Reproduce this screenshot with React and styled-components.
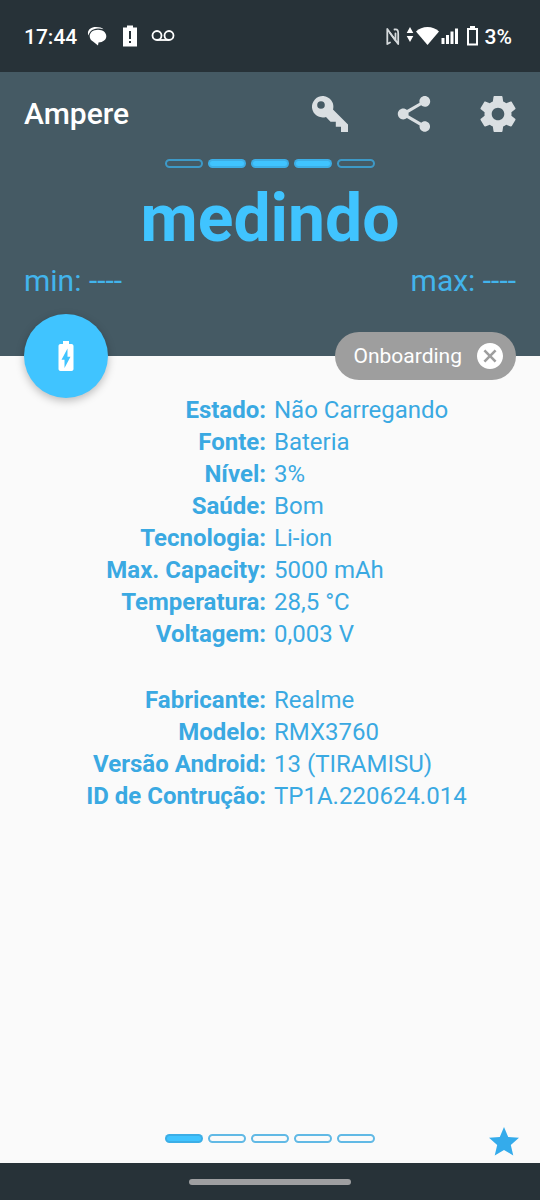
import React from "react";
import styled, { createGlobalStyle } from "styled-components";

const GlobalStyle = createGlobalStyle`
  * {
    box-sizing: border-box;
  }
  body {
    margin: 0;
    background: #fafafa;
    font-family: Roboto, "Liberation Sans", sans-serif;
  }
`;
const Screen = styled.div`
  display: flex;
  flex-direction: column;
  min-height: 100vh;
  background: #fafafa;
`;
const StatusBar = styled.div`
  display: flex;
  align-items: center;
  justify-content: space-between;
  height: 72px;
  padding: 2px 28px 0 24px;
  background: #273238;
  color: #ffffff;
  font-weight: 500;
  font-size: 21px;
  line-height: 24px;
`;
const StatusGroup = styled.div`
  display: flex;
  align-items: center;
  gap: ${(props) => props.$gap};
`;
const StatusIcon = styled.svg`
  display: block;
  flex: none;
  fill: #ffffff;
`;
const Header = styled.header`
  display: flex;
  flex-direction: column;
  background: #455a64;
  color: #40c4ff;
`;
const Toolbar = styled.div`
  display: flex;
  align-items: center;
  justify-content: space-between;
  height: 84px;
  padding: 0 24px;
`;
const AppName = styled.h1`
  margin: 0;
  font-weight: 500;
  font-size: 30px;
  line-height: 38px;
  color: #ffffff;
`;
const Actions = styled.div`
  display: flex;
  gap: 48px;
`;
const IconButton = styled.button`
  display: flex;
  padding: 0;
  border: none;
  background: none;
  color: #dadfe2;
  cursor: pointer;
`;
const ActionIcon = styled.svg`
  width: 36px;
  height: 36px;
  fill: currentColor;
`;
const Segments = styled.div`
  display: flex;
  justify-content: center;
  gap: 5px;
  padding: 3px 0;
`;
const Segment = styled.span`
  width: 38px;
  height: 9px;
  border: 2px solid rgba(59, 169, 224, 0.8);
  border-radius: 5px;
  background: ${(props) => (props.$on ? "#40c4ff" : "transparent")};
`;
const Reading = styled.h2`
  margin: 9px 0 5px;
  font-weight: 700;
  font-size: 66px;
  line-height: 78px;
  text-align: center;
`;
const Range = styled.div`
  display: flex;
  justify-content: space-between;
  padding: 0 24px;
  font-size: 30px;
  line-height: 36px;
  color: #42b4ec;
`;
const Floating = styled.div`
  display: flex;
  align-items: center;
  justify-content: space-between;
  position: relative;
  margin: 15px 0 -42px;
  padding: 0 24px;
`;
const RoundButton = styled.button`
  display: flex;
  align-items: center;
  justify-content: center;
  width: 84px;
  height: 84px;
  padding: 0;
  border: none;
  border-radius: 50%;
  background: #40c4ff;
  box-shadow: 0 3px 9px rgba(0, 0, 0, 0.25);
  cursor: pointer;
`;
const Chip = styled.button`
  display: flex;
  align-items: center;
  gap: 15px;
  height: 48px;
  padding: 0 13px 0 19px;
  border: none;
  border-radius: 24px;
  background: #9e9e9e;
  color: #ffffff;
  font-family: inherit;
  font-size: 21px;
  line-height: 24px;
  cursor: pointer;
`;
const Main = styled.main`
  flex: 1;
  padding-top: 38px;
`;
const Details = styled.table`
  width: 100%;
  table-layout: fixed;
  border-collapse: collapse;
  color: #3aa9e2;
  font-size: 24px;
  line-height: 32px;
`;
const Group = styled.tbody`
  & + &::before {
    content: "";
    display: table-row;
    height: 34px;
  }
`;
const Label = styled.th`
  padding: 0 4px 0 0;
  font-weight: 700;
  text-align: right;
  white-space: nowrap;
`;
const Value = styled.td`
  padding: 0 0 0 4px;
  white-space: nowrap;
`;
const Footer = styled.footer`
  display: grid;
  grid-template-columns: 1fr auto 1fr;
  align-items: center;
  height: 50px;
  padding: 0 18px;
`;
const Favorite = styled(IconButton)`
  grid-column: 3;
  justify-self: end;
  padding-top: 8px;
  color: #34abeb;
`;
const Pager = styled(Segments)`
  grid-column: 2;
`;
const NavBar = styled.div`
  display: flex;
  align-items: center;
  justify-content: center;
  height: 37px;
  background: #273238;
`;
const Handle = styled.span`
  width: 30%;
  height: 6px;
  border-radius: 3px;
  background: #9e9fa1;
`;

const battery = [
  ["Estado", "Não Carregando"],
  ["Fonte", "Bateria"],
  ["Nível", "3%"],
  ["Saúde", "Bom"],
  ["Tecnologia", "Li-ion"],
  ["Max. Capacity", "5000 mAh"],
  ["Temperatura", "28,5 °C"],
  ["Voltagem", "0,003 V"],
];
const device = [
  ["Fabricante", "Realme"],
  ["Modelo", "RMX3760"],
  ["Versão Android", "13 (TIRAMISU)"],
  ["ID de Contrução", "TP1A.220624.014"],
];

const Rows = ({ items }) => (
  <Group>
    {items.map(([label, value]) => (
      <tr key={label}>
        <Label scope="row">{label}:</Label>
        <Value>{value}</Value>
      </tr>
    ))}
  </Group>
);

const App = () => {
  return (
    <Screen>
      <GlobalStyle />
      <StatusBar>
        <StatusGroup $gap="10px">
          <span>17:44</span>
          <StatusIcon width="88" height="24" viewBox="0 0 88 24">
            <path d="M1.500 10.500C-.5 6 3 2 9 2c3.500 0 6 .8 7.500 2.200C14.500 3.600 12.500 3.400 10.500 3.600 5.500 4 2.500 6.500 1.500 10.500z" />
            <path d="M11 4.800c5 0 8.300 2.800 8.300 6.400 0 3.400-3.300 6-7.800 6.300L11 20.500 6 16.400C3.800 15.300 2.700 13.400 2.700 11.200c0-3.600 3.300-6.400 8.300-6.400z" />
            <path
              fillRule="evenodd"
              d="M36 2.500h4V.5h6v2h4v19H36zM42 6v8h2V6zm0 10v2h2v-2z"
            />
            <g fill="none" stroke="#ffffff" strokeWidth="1.8">
              <circle cx="70" cy="10.500" r="4.500" />
              <circle cx="82" cy="10.500" r="4.500" />
              <path d="M70 15h12" />
            </g>
          </StatusIcon>
        </StatusGroup>
        <StatusGroup $gap="6px">
          <StatusIcon width="94" height="24" viewBox="0 0 94 24">
            <g
              fill="none"
              stroke="#d5dadc"
              strokeWidth="1.800"
              strokeLinejoin="round"
              strokeLinecap="round"
            >
              <path d="M5 17.500L2.300 19V4L10.500 15.500V8.500" />
              <path d="M9.500 4.500C13 4 13.200 6 13.200 9v10L5 8" />
            </g>
            <path d="M25 2l3.300 6h-6.600zM21.700 11h6.600L25 17z" />
            <path d="M31 6.500C34 3.500 38 2 42.500 2S51 3.500 54 6.500L42.500 20z" />
            <path d="M56.500 13h3v6h-3zM61 10h3v9h-3zM65.500 6.500h3V19h-3zM70 3.500h3V19h-3z" />
            <path
              fillRule="evenodd"
              d="M82 3h3V1h5v2h3v17.500H82zM84 5v13.500h7V5z"
            />
          </StatusIcon>
          <span>3%</span>
        </StatusGroup>
      </StatusBar>
      <Header>
        <Toolbar>
          <AppName>Ampere</AppName>
          <Actions>
            <IconButton aria-label="Licença">
              <ActionIcon viewBox="0 0 36 36">
                <path
                  fillRule="evenodd"
                  d="M21 13.500L36 28.500V36h-7v-5.200h-5.200v-5h-5.300L14 20.900A10.700 10.700 0 1 1 21 13.500zM9 5.200a3.800 3.800 0 1 0 0 7.600 3.800 3.800 0 0 0 0-7.600z"
                />
              </ActionIcon>
            </IconButton>
            <IconButton aria-label="Compartilhar">
              <ActionIcon viewBox="2 2 20 20">
                <path d="M18 16.080c-.76 0-1.440.3-1.960.77L8.910 12.700c.05-.23.09-.46.09-.7s-.04-.47-.09-.7l7.050-4.110c.54.5 1.250.81 2.040.81 1.660 0 3-1.340 3-3s-1.340-3-3-3-3 1.340-3 3c0 .24.040.47.090.7L8.040 9.810C7.500 9.310 6.790 9 6 9c-1.660 0-3 1.340-3 3s1.340 3 3 3c.79 0 1.500-.31 2.040-.81l7.120 4.160c-.05.21-.08.43-.08.65 0 1.610 1.310 2.920 2.920 2.920s2.920-1.310 2.920-2.920-1.310-2.920-2.920-2.920z" />
              </ActionIcon>
            </IconButton>
            <IconButton aria-label="Configurações">
              <ActionIcon viewBox="2 2 20 20">
                <path d="M19.430 12.980c.04-.32.070-.64.070-.98s-.03-.66-.07-.98l2.110-1.650c.19-.15.240-.42.120-.64l-2-3.460c-.12-.22-.39-.3-.61-.22l-2.490 1c-.52-.4-1.080-.73-1.690-.98l-.38-2.650C14.460 2.180 14.250 2 14 2h-4c-.25 0-.46.180-.49.420l-.38 2.650c-.61.250-1.170.590-1.690.980l-2.490-1c-.23-.09-.49 0-.61.220l-2 3.460c-.13.220-.07.490.120.640l2.110 1.650c-.04.320-.07.650-.07.980s.030.660.070.980l-2.110 1.650c-.19.150-.24.420-.12.640l2 3.460c.12.220.39.300.61.220l2.490-1c.52.400 1.080.730 1.690.980l.38 2.650c.03.240.24.420.49.420h4c.25 0 .46-.18.49-.42l.38-2.650c.61-.25 1.170-.59 1.690-.98l2.490 1c.23.090.49 0 .61-.22l2-3.460c.12-.22.070-.49-.12-.64l-2.110-1.650zM12 15.500c-1.930 0-3.500-1.570-3.500-3.500s1.570-3.500 3.500-3.500 3.500 1.570 3.500 3.500-1.570 3.500-3.500 3.500z" />
              </ActionIcon>
            </IconButton>
          </Actions>
        </Toolbar>
        <Segments>
          {[false, true, true, true, false].map((on, i) => (
            <Segment key={i} $on={on} />
          ))}
        </Segments>
        <Reading>medindo</Reading>
        <Range>
          <span>min: ----</span>
          <span>max: ----</span>
        </Range>
        <Floating>
          <RoundButton aria-label="Bateria">
            <svg width="36" height="36" viewBox="0 0 24 24" fill="#ffffff">
              <path d="M15.670 4H14V2h-4v2H8.330C7.600 4 7 4.600 7 5.330v15.330C7 21.400 7.600 22 8.330 22h7.330c.74 0 1.340-.6 1.340-1.330V5.330C17 4.600 16.400 4 15.670 4zM11 20v-5.500H9L13 7v5.500h2L11 20z" />
            </svg>
          </RoundButton>
          <Chip>
            Onboarding
            <svg width="26" height="26" viewBox="2 2 20 20" fill="#ffffff">
              <path d="M12 2C6.470 2 2 6.470 2 12s4.470 10 10 10 10-4.470 10-10S17.530 2 12 2zm5 13.590L15.590 17 12 13.410 8.410 17 7 15.590 10.590 12 7 8.410 8.410 7 12 10.590 15.590 7 17 8.410 13.410 12 17 15.590z" />
            </svg>
          </Chip>
        </Floating>
      </Header>
      <Main>
        <Details>
          <Rows items={battery} />
          <Rows items={device} />
        </Details>
      </Main>
      <Footer>
        <Pager>
          {[true, false, false, false, false].map((on, i) => (
            <Segment key={i} $on={on} />
          ))}
        </Pager>
        <Favorite aria-label="Favorito">
          <ActionIcon viewBox="0 0 24 24">
            <path d="M12 17.270L18.180 21l-1.640-7.030L22 9.240l-7.190-.61L12 2 9.190 8.630 2 9.240l5.460 4.730L5.820 21z" />
          </ActionIcon>
        </Favorite>
      </Footer>
      <NavBar>
        <Handle />
      </NavBar>
    </Screen>
  );
};
export default App;
